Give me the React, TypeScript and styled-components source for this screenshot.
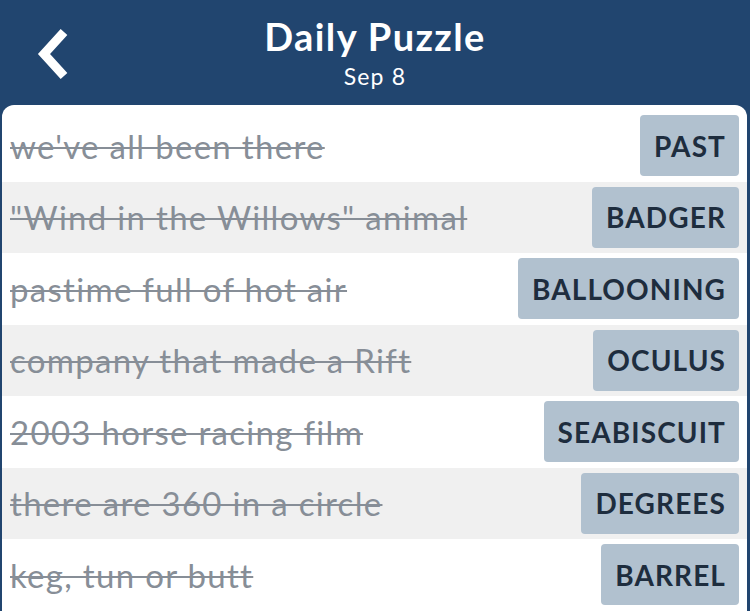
import styled, { createGlobalStyle } from "styled-components";
import { FC } from "react";

const Global = createGlobalStyle`
  html, body {
    margin: 0;
    padding: 0;
    background: #21456f;
  }
  body {
    font-family: Lato, "Noto Sans", sans-serif;
  }
`;

const Page = styled.div`
  width: 750px;
  height: 611px;
  overflow: hidden;
  background: #21456f;
  display: flex;
  flex-direction: column;
`;
const Header = styled.header`
  height: 105px;
  display: flex;
  align-items: center;
  justify-content: center;
  position: relative;
  flex-shrink: 0;
`;
const BackButton = styled.button`
  position: absolute;
  left: 34px;
  top: 26px;
  width: 40px;
  height: 56px;
  padding: 0;
  border: none;
  background: none;
  cursor: pointer;
`;
const Titles = styled.div`
  display: flex;
  flex-direction: column;
  align-items: center;
  gap: 8px;
  color: #fff;
  margin-top: -2px;
`;
const Title = styled.h1`
  margin: 0;
  font-size: 38px;
  font-weight: 700;
  line-height: 40px;
  letter-spacing: 1.4px;
`;
const DateLine = styled.div`
  font-size: 23px;
  line-height: 24px;
  letter-spacing: 1.2px;
`;
const Card = styled.main`
  flex: 1;
  margin: 0 3px 0 2px;
  padding-top: 5px;
  background: #fff;
  border-radius: 12px 12px 0 0;
  overflow: hidden;
`;
const Row = styled.div<{ $alt?: boolean }>`
  height: 71.5px;
  display: flex;
  align-items: center;
  justify-content: space-between;
  padding: 0 8px 0 8px;
  background: ${(p) => (p.$alt ? "#f0f0f0" : "transparent")};
`;
const Clue = styled.span`
  font-size: 33px;
  letter-spacing: 1.3px;
  color: #878e97;
  text-decoration: line-through;
  text-decoration-thickness: 2px;
  white-space: nowrap;
`;
const Answer = styled.span`
  height: 61px;
  display: flex;
  align-items: center;
  padding: 0 13px 0 14px;
  background: #b1c1cf;
  border-radius: 4px;
  color: #1e2d3e;
  font-size: 28px;
  font-weight: 700;
  letter-spacing: 1.1px;
`;

const clues = [
  ["we've all been there", "PAST"],
  ['"Wind in the Willows" animal', "BADGER"],
  ["pastime full of hot air", "BALLOONING"],
  ["company that made a Rift", "OCULUS"],
  ["2003 horse racing film", "SEABISCUIT"],
  ["there are 360 in a circle", "DEGREES"],
  ["keg, tun or butt", "BARREL"],
];

const BackIcon: FC = () => (
  <svg width="40" height="56" viewBox="0 0 40 56">
    <path d="M30 6 L10 28 L30 50" fill="none" stroke="#fff" strokeWidth="9" />
  </svg>
);

const App: FC = () => {
  return (
    <Page>
      <Global />
      <Header>
        <BackButton aria-label="Back">
          <BackIcon />
        </BackButton>
        <Titles>
          <Title>Daily Puzzle</Title>
          <DateLine>Sep 8</DateLine>
        </Titles>
      </Header>
      <Card>
        {clues.map(([clue, answer], i) => (
          <Row key={answer} $alt={i % 2 === 1}>
            <Clue>{clue}</Clue>
            <Answer>{answer}</Answer>
          </Row>
        ))}
      </Card>
    </Page>
  );
};

export default App;
